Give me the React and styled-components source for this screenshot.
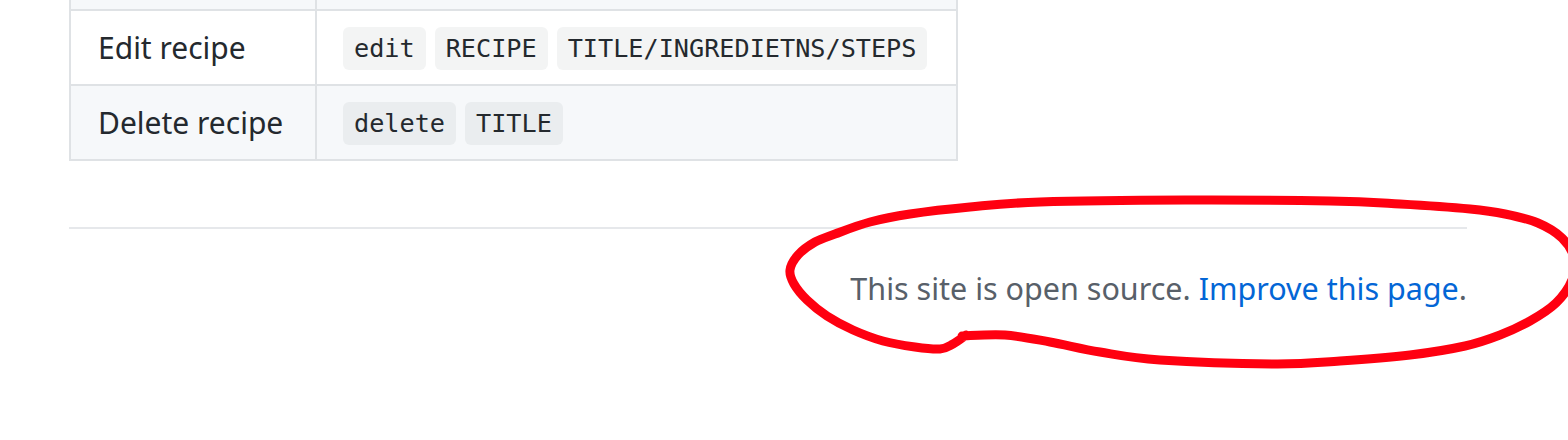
import React from 'react'
import styled, { createGlobalStyle } from 'styled-components'

const GlobalStyle = createGlobalStyle`
    html, body {
        margin: 0;
        padding: 0;
        background: #ffffff;
    }
    body {
        font-family: "Noto Sans", "Liberation Sans", sans-serif;
        color: #24292e;
        overflow: hidden;
    }
`

// first row is scrolled almost out of view, only its bottom edge shows
const rows = [
    { id: 'above', label: '', codes: [] },
    { id: 'edit', label: 'Edit recipe', codes: ['edit', 'RECIPE', 'TITLE/INGREDIETNS/STEPS'] },
    { id: 'delete', label: 'Delete recipe', codes: ['delete', 'TITLE'] },
]

// hand drawn ring round the footer, points taken from the screenshot
const ring = [
    [962, 336], [1005, 335], [1050, 342], [1100, 352], [1160, 360], [1275, 364],
    [1340, 361], [1410, 355], [1465, 346], [1500, 335], [1530, 321], [1556, 303],
    [1572, 280], [1574, 258], [1562, 238], [1538, 223], [1505, 214], [1470, 209],
    [1400, 204], [1330, 201], [1185, 200], [1040, 202], [970, 207], [910, 214],
    [870, 222], [835, 234], [815, 242], [798, 255], [790, 270], [794, 284],
    [807, 300], [827, 316], [853, 330], [883, 341], [915, 347], [940, 349],
    [953, 344], [966, 335],
]

function smoothPath(pts) {
    let d = `M${pts[0][0]} ${pts[0][1]}`
    for (let i = 0; i < pts.length - 1; i++) {
        const p0 = pts[i - 1] || pts[i]
        const p1 = pts[i]
        const p2 = pts[i + 1]
        const p3 = pts[i + 2] || p2
        const c1 = [p1[0] + (p2[0] - p0[0]) / 6, p1[1] + (p2[1] - p0[1]) / 6]
        const c2 = [p2[0] - (p3[0] - p1[0]) / 6, p2[1] - (p3[1] - p1[1]) / 6]
        d += ` C${c1[0]} ${c1[1]} ${c2[0]} ${c2[1]} ${p2[0]} ${p2[1]}`
    }
    return d
}

function App() {
    return (
        <>
            <GlobalStyle />
            <PageStyled>
                <Table>
                    <tbody>
                        {rows.map((row, i) => (
                            <Row key={row.id} $striped={i % 2 === 0}>
                                <LabelCell>{row.label}</LabelCell>
                                <Cell>
                                    <CodeList>
                                        {row.codes.map((c) => (
                                            <Code key={c}>{c}</Code>
                                        ))}
                                    </CodeList>
                                </Cell>
                            </Row>
                        ))}
                    </tbody>
                </Table>
                <Rule />
                <Footer>
                    This site is open source. <a href="#">Improve this page</a>.
                </Footer>
            </PageStyled>
            <Ring width="1568" height="440" viewBox="0 0 1568 440">
                <path d={smoothPath(ring)} />
            </Ring>
        </>
    )
}

const PageStyled = styled.div`
    width: 1398px;
    margin-top: -66px;
    padding-left: 69px;
`

const Table = styled.table`
    width: 889px;
    border-collapse: collapse;
    border-spacing: 0;
`

const Row = styled.tr`
    height: 75px;
    background: ${({ $striped }) => ($striped ? '#f6f8fa' : '#ffffff')};
`

const Cell = styled.td`
    border: 2px solid #dfe2e5;
    padding: 0 26px;
    vertical-align: middle;
`

const LabelCell = styled(Cell)`
    width: 191px;
    font-size: 30px;
    color: #24292e;
    padding-left: 27px;
`

const CodeList = styled.div`
    display: flex;
    gap: 9px;
    padding-top: 2px;
`

const Code = styled.code`
    display: inline-block;
    font-family: "DejaVu Sans Mono", "Liberation Mono", monospace;
    font-size: 25.2px;
    line-height: 33px;
    padding: 5px 11px;
    color: #24292e;
    background: rgba(27, 31, 35, 0.05);
    border-radius: 6px;
`

const Rule = styled.hr`
    height: 2px;
    margin: 66px 0 0;
    padding: 0;
    border: 0;
    background: #e6e8eb;
`

const Footer = styled.div`
    padding-top: 37px;
    text-align: right;
    font-size: 30.5px;
    line-height: 44px;
    color: #586069;
    a {
        color: #0366d6;
        text-decoration: none;
    }
`

const Ring = styled.svg`
    position: absolute;
    top: 0;
    left: 0;
    pointer-events: none;
    path {
        fill: none;
        stroke: #ff0010;
        stroke-width: 9;
        stroke-linecap: round;
        stroke-linejoin: round;
    }
`

export default App
